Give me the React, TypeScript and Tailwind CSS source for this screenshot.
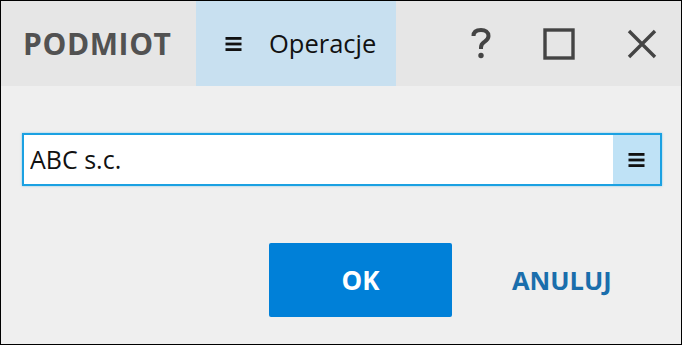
import { useState } from "react";

function MenuGlyph({ className }: { className?: string }) {
  return (
    <svg width="17" height="16" viewBox="0 0 17 16" className={className}>
      <rect x="0.5" y="1" width="16" height="2.8" fill="currentColor" />
      <rect x="0.5" y="6.6" width="16" height="2.8" fill="currentColor" />
      <rect x="0.5" y="12.2" width="16" height="2.8" fill="currentColor" />
    </svg>
  );
}

export default function App() {
  const [value, setValue] = useState("ABC s.c.");

  return (
    <div
      className="w-[682px] h-[345px] border border-black bg-[#efefef] flex flex-col"
      style={{ fontFamily: '"Open Sans", "Liberation Sans", sans-serif' }}
    >
      {/* title bar */}
      <div className="h-[85px] bg-[#e6e6e6] flex items-stretch">
        <div className="w-[195px] flex items-center pl-[22px]">
          <span className="text-[30px] font-bold text-[#525252] tracking-[0.6px]">PODMIOT</span>
        </div>
        <div className="w-[200px] bg-[#c8e0f0] flex items-center pl-[29px] text-[#111]">
          <MenuGlyph />
          <span className="ml-[27px] text-[25.5px] mb-[1px]">Operacje</span>
        </div>
        <div className="flex-1 flex items-center justify-end pr-[24px] text-[#444]">
          <button className="w-[22px] h-[32px] flex items-center justify-center mr-[51px]">
            <svg width="20" height="31" viewBox="0 0 20 31">
              <path
                d="M2.5 8 C2.5 4 5.5 2 10 2 C14.5 2 17.5 4.3 17.5 8 C17.5 11.3 15.3 12.6 13 14.2 C11 15.6 10 16.8 10 19.5 V21"
                fill="none"
                stroke="currentColor"
                strokeWidth="4"
              />
              <circle cx="10" cy="27.5" r="2.7" fill="currentColor" />
            </svg>
          </button>
          <button className="w-[32px] h-[32px] flex items-center justify-center mr-[52px]">
            <svg width="32" height="32" viewBox="0 0 32 32">
              <rect x="2" y="2" width="28" height="28" fill="none" stroke="currentColor" strokeWidth="3.4" />
            </svg>
          </button>
          <button className="w-[30px] h-[30px] flex items-center justify-center">
            <svg width="30" height="30" viewBox="0 0 30 30">
              <path d="M2 2 L28 28 M28 2 L2 28" stroke="currentColor" strokeWidth="3.4" />
            </svg>
          </button>
        </div>
      </div>

      {/* body */}
      <div className="flex-1 flex flex-col pl-[21px] pr-[19px] pt-[47px]">
        <div className="h-[53px] border-2 border-[#1ba1e2] bg-white flex shadow-[0_0_2px_rgba(27,161,226,0.5)]">
          <input
            value={value}
            onChange={(e) => setValue(e.target.value)}
            className="flex-1 min-w-0 pl-[6px] text-[25px] text-[#111] outline-none bg-white"
          />
          <button className="w-[47px] bg-[#bfe2f6] flex items-center justify-center text-[#111]">
            <MenuGlyph />
          </button>
        </div>

        <div className="flex items-center mt-[57px] pl-[247px]">
          <button className="w-[183px] h-[74px] rounded-[2px] bg-[#0080d8] text-white text-[26px] font-bold">
            OK
          </button>
          <button className="ml-[60px] text-[25.5px] font-bold text-[#1a6eac]">ANULUJ</button>
        </div>
      </div>
    </div>
  );
}
